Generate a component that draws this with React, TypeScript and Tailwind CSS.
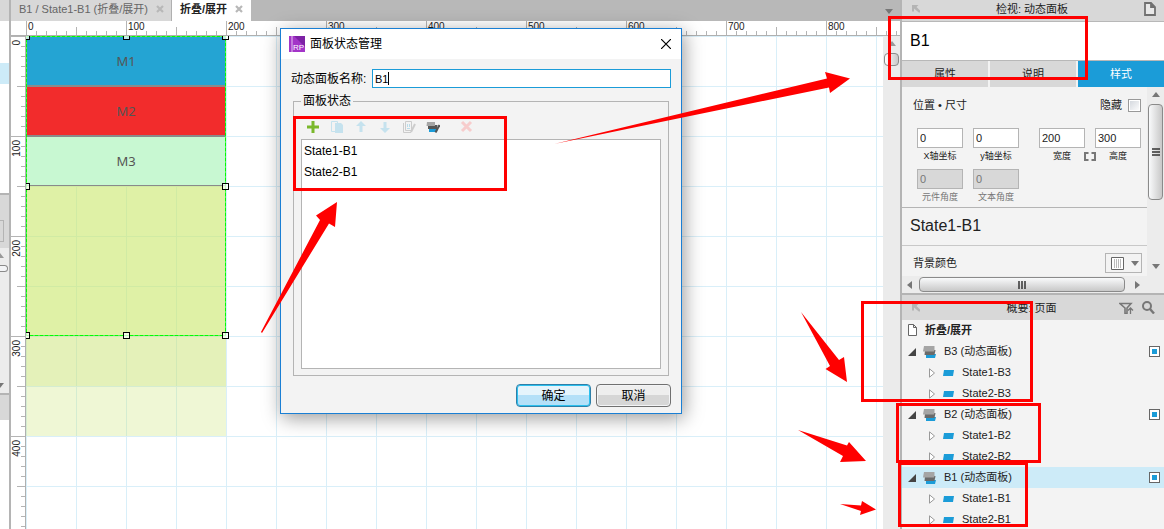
import { useState } from "react";
import type { ReactNode } from "react";

type TreeItem = { id: string; states: string[] };

const TREE: TreeItem[] = [
  { id: "B3", states: ["State1-B3", "State2-B3"] },
  { id: "B2", states: ["State1-B2", "State2-B2"] },
  { id: "B1", states: ["State1-B1", "State2-B1"] },
];

const H_MARKS = [0, 100, 200, 300, 400, 500, 600, 700, 800];
const V_MARKS = [0, 100, 200, 300, 400];
const TICKS = [0, 1, 2, 3, 4, 5, 6, 7, 8, 9];

// Selection handles, placed on the edges of the selected panel.
const HANDLES = [
  "-left-[3px] -top-[3px]",
  "left-[97px] -top-[3px]",
  "-right-[3px] -top-[3px]",
  "-left-[3px] top-[147px]",
  "-right-[3px] top-[147px]",
  "-left-[3px] -bottom-[3px]",
  "left-[97px] -bottom-[3px]",
  "-right-[3px] -bottom-[3px]",
];

function Triangle({ dir, className = "text-[#777777]" }: { dir: "up" | "down" | "left" | "right"; className?: string }) {
  const d = {
    up: "M0 6 4 1l4 5z",
    down: "M0 2h8L4 7z",
    left: "M6 0v8L1 4z",
    right: "M2 0v8l5-4z",
  }[dir];
  return (
    <svg viewBox="0 0 8 8" className={`size-2 flex-none ${className}`} fill="currentColor">
      <path d={d} />
    </svg>
  );
}

function PanelIcon() {
  return (
    <svg viewBox="0 0 14 12" className="h-3 w-3.5 flex-none">
      <path d="M3 8h10l-1 4H3z" fill="#1b9cd8" />
      <path d="M2 4h10.500l-1 5H1.500z" fill="#6a6a6a" />
      <path d="M1 0h10.500v4l-.5 1.500H0z" fill="#a5a5a5" />
    </svg>
  );
}

function CollapseIcon() {
  return (
    <svg viewBox="0 0 8 8" className="size-2 flex-none" fill="#b4b4b4">
      <path d="M0 0h6.500L4.500 2 8 5.500V7.500H6.800L2 3.500V6.500L0 6.500z" />
    </svg>
  );
}

function HorizontalRuler() {
  return (
    <div className="flex h-[15px] flex-none overflow-hidden border-b border-[#b0b0b0] bg-white pl-[15px] text-[10px] leading-[12px]">
      {H_MARKS.map((mark) => (
        <div key={mark} className="relative flex w-[100px] flex-none items-end">
          {TICKS.map((t) => (
            <span
              key={t}
              className={`w-[10px] flex-none border-l border-[#b4b4b4] ${t === 0 ? "h-[14px]" : t === 5 ? "h-2" : "h-1"}`}
            />
          ))}
          <span className="absolute left-0.5 top-0">{mark}</span>
        </div>
      ))}
    </div>
  );
}

function VerticalRuler() {
  return (
    <div className="flex w-[15px] flex-none flex-col overflow-hidden border-r border-[#b0b0b0] bg-white text-[10px] leading-[12px]">
      {V_MARKS.map((mark) => (
        <div key={mark} className="relative flex h-[100px] flex-none flex-col items-end">
          {TICKS.map((t) => (
            <span
              key={t}
              className={`h-[10px] flex-none border-t border-[#b4b4b4] ${t === 0 ? "w-[14px]" : t === 5 ? "w-2" : "w-1"}`}
            />
          ))}
          <span className="absolute left-0 top-1 rotate-180 [writing-mode:vertical-rl]">{mark}</span>
        </div>
      ))}
    </div>
  );
}

function Canvas() {
  const menu = "flex items-center justify-center border-[#8a8a8a]";
  return (
    <div className="min-w-0 flex-1 overflow-hidden bg-white bg-[linear-gradient(#d9eff9_1px,transparent_1px),linear-gradient(90deg,#d9eff9_1px,transparent_1px)] bg-[size:50px_50px]">
      <div className="relative w-[200px] font-['Noto_Sans','Noto_Sans_CJK_SC',sans-serif] text-[13px] text-[#555555]">
        <div className={`${menu} h-[51px] border-b-2 bg-[#24a4d3]`}>M1</div>
        <div className={`${menu} h-[50px] border-b-2 bg-[#f22c2c]`}>M2</div>
        <div className={`${menu} h-[49px] border-b bg-[#c8f8d2]`}>M3</div>
        <div className="h-[150px] bg-[#c9e76a]/60" />
        <div className="h-[50px] bg-[#cae473]/50" />
        <div className="h-[50px] bg-[#cae473]/30" />
        <div className="absolute left-0 top-0 h-[300px] w-[200px]">
          <svg viewBox="0 0 200 300" className="absolute left-0 top-0 h-full w-full" fill="none">
            <path d="M.5.5h199v299H.5z" stroke="#a0e0a0" />
            <path d="M.5.5h199v299H.5z" stroke="#00ff00" strokeDasharray="4 1" />
          </svg>
          {HANDLES.map((pos) => (
            <span key={pos} className={`absolute size-[7px] border border-black bg-white/70 ${pos}`} />
          ))}
        </div>
      </div>
    </div>
  );
}

function LeftEdge() {
  return (
    <aside className="flex w-[11px] flex-none flex-col border-r-2 border-[#b4b4b4] bg-white">
      <div className="h-[21px] bg-[#d8d8d8]" />
      <div className="h-[42px]" />
      <div className="h-[21px] bg-[#cdebf8]" />
      <div className="h-[109px]" />
      <div className="h-[55px] border-t-2 border-[#b4b4b4] bg-[#d8d8d8] pt-[25px]">
        <div className="h-[22px] w-1 border-y border-r border-[#b4b4b4]" />
      </div>
      <div className="flex h-[145px] flex-col items-start overflow-hidden bg-[#ececec] py-1">
        <Triangle dir="up" className="-ml-1 text-[#999999]" />
        <div className="mt-[5px] h-[7px] w-2 rounded-r-sm border border-l-0 border-[#8a8a8a] bg-gray-100" />
        <Triangle dir="down" className="-ml-1 mt-auto text-[#777777]" />
      </div>
      <div className="h-[27px] border-t-2 border-[#b4b4b4] bg-[#d8d8d8]" />
    </aside>
  );
}

function CloseTab() {
  return (
    <button aria-label="关闭" className="text-[#b8b8b8]">
      <svg viewBox="0 0 8 8" className="size-2" stroke="currentColor" strokeWidth="2.200">
        <path d="M1 1l6 6M7 1 1 7" />
      </svg>
    </button>
  );
}

function TabBar() {
  return (
    <div className="flex h-[21px] flex-none items-stretch bg-[#b8b8b8]">
      <div className="flex w-[161px] items-center justify-between border-r border-[#b0b0b0] bg-[#d8d8d8] pb-[3px] pl-2 pr-[7px] text-[#666666]">
        <button className="whitespace-nowrap">B1 / State1-B1 (折叠/展开)</button>
        <CloseTab />
      </div>
      <div className="flex w-[79px] items-center justify-between bg-white px-2 pb-[3px] font-bold">
        <button className="whitespace-nowrap">折叠/展开</button>
        <CloseTab />
      </div>
      <button aria-label="更多标签" className="ml-auto px-[7px]">
        <Triangle dir="down" />
      </button>
    </div>
  );
}

function NumberField({ id, label, value, disabled }: { id: string; label: string; value: string; disabled?: boolean }) {
  return (
    <div className="flex w-[46px] flex-col items-center">
      <input
        id={id}
        defaultValue={value}
        disabled={disabled}
        className="h-5 w-full border border-[#b4b4b4] bg-white px-0.5 text-[11px] disabled:bg-[#d8d8d8] disabled:text-[#777777]"
      />
      <label htmlFor={id} className={`whitespace-nowrap text-[9px] leading-4 ${disabled ? "text-[#777777]" : ""}`}>
        {label}
      </label>
    </div>
  );
}

function Inspector() {
  const [tab, setTab] = useState("样式");
  return (
    <section className="flex h-[295px] flex-none flex-col border-b-2 border-[#b4b4b4]">
      <header className="flex h-[22px] flex-none items-center justify-between border-b border-[#b8b8b8] bg-[#d8d8d8] pb-1 pl-[10px] pr-2">
        <CollapseIcon />
        <h2>检视: 动态面板</h2>
        <svg viewBox="0 0 12 14" className="h-3.5 w-3" fill="#e8e8e8" stroke="#707070" strokeWidth="1.800">
          <path d="M1 1h6l4 4v8H1zM7 1v4h4" />
        </svg>
      </header>
      <input
        aria-label="名称"
        defaultValue="B1"
        className="h-[39px] w-full flex-none border-b border-[#b8b8b8] bg-white px-2 text-[16px] text-black outline-none"
      />
      <div role="tablist" className="flex h-[26px] flex-none gap-0.5">
        {["属性", "说明", "样式"].map((name) => (
          <button
            key={name}
            role="tab"
            aria-selected={tab === name}
            onClick={() => setTab(name)}
            className={`flex-1 ${tab === name ? "bg-[#1b9cd8] text-white" : "bg-[#d8d8d8]"}`}
          >
            {name}
          </button>
        ))}
      </div>
      <div className="flex h-[189px] flex-none">
        <div className="min-w-0 flex-1">
          <div className="h-[121px] border-b border-[#b4b4b4] pl-[11px] pr-1.5 pt-[11px]">
            <div className="flex h-[14px] items-center justify-between">
              <h3>位置 • 尺寸</h3>
              <label className="flex items-center gap-1.5">
                隐藏
                <input
                  type="checkbox"
                  className="size-[13px] appearance-none border border-[#999999] bg-gradient-to-br from-gray-300 to-white ring-1 ring-inset ring-white"
                />
              </label>
            </div>
            <div className="mt-4 flex justify-between pl-1">
              <div className="flex gap-[10px]">
                <NumberField id="x" label="X轴坐标" value="0" />
                <NumberField id="y" label="y轴坐标" value="0" />
              </div>
              <div className="flex">
                <NumberField id="w" label="宽度" value="200" />
                <button aria-label="锁定宽高比" className="mt-5 flex h-4 w-[10px] items-center justify-center overflow-visible">
                  <svg viewBox="0 0 12 9" className="h-[9px] w-3 flex-none" fill="none" stroke="#777777" strokeWidth="2">
                    <path d="M4.500 1H1v7h3.500M7.500 1H11v7H7.500" />
                  </svg>
                </button>
                <NumberField id="h" label="高度" value="300" />
              </div>
            </div>
            <div className="mt-[5px] flex gap-[10px] pl-1">
              <NumberField id="rotate" label="元件角度" value="0" disabled />
              <NumberField id="text-rotate" label="文本角度" value="0" disabled />
            </div>
          </div>
          <div className="flex h-[38px] items-center border-b border-[#c8c8c8] px-2 pb-0.5 text-[16px]">State1-B1</div>
          <div className="flex h-[30px] items-center justify-between pl-[11px] pr-[5px] pt-1">
            <span>背景颜色</span>
            <button aria-label="背景颜色" className="flex h-5 w-[37px] items-center justify-between border border-[#b4b4b4] pl-[5px] pr-0.5">
              <svg viewBox="0 0 13 13" className="size-[13px]">
                <path d="M.5.5h12v12H.5z" fill="#ffffff" stroke="#666666" />
                <path d="M3.500 2v9M5.500 2v9M7.500 2v9M9.500 2v9" stroke="#bbbbbb" />
              </svg>
              <Triangle dir="down" />
            </button>
          </div>
        </div>
        <div className="flex w-[17px] flex-none flex-col items-center bg-[#ececec] py-1">
          <Triangle dir="up" />
          <div className="mt-[5px] flex h-24 w-[15px] items-center justify-center rounded-sm border border-[#8a8a8a] bg-gradient-to-r from-gray-50 to-[#c8c8c8]">
            <svg viewBox="0 0 8 8" className="size-2" stroke="#333333" strokeWidth="1.500">
              <path d="M0 1h8M0 4h8M0 7h8" />
            </svg>
          </div>
          <Triangle dir="down" className="mb-0.5 mt-auto text-[#777777]" />
        </div>
      </div>
      <div className="flex flex-1 items-center bg-[#ececec] pl-1">
        <Triangle dir="left" />
        <div className="ml-[5px] flex h-[15px] flex-1 items-center justify-center rounded-sm border border-[#8a8a8a] bg-gradient-to-b from-gray-50 to-[#c8c8c8]">
          <svg viewBox="0 0 8 8" className="size-2" stroke="#333333" strokeWidth="1.500">
            <path d="M1 0v8M4 0v8M7 0v8" />
          </svg>
        </div>
        <Triangle dir="right" className="ml-2 mr-[23px] text-[#777777]" />
      </div>
    </section>
  );
}

function Outline() {
  return (
    <section className="min-h-0 flex-1 overflow-hidden">
      <header className="flex h-[25px] items-center bg-[#d8d8d8] pl-[10px] pr-[9px]">
        <CollapseIcon />
        <h2 className="flex-1 pl-6 text-center">概要: 页面</h2>
        <button aria-label="筛选" className="mr-2">
          <svg viewBox="0 0 15 12" className="h-3 w-[15px]" fill="none" stroke="#777777" strokeWidth="1.600">
            <path d="M1 1.500h11L8 6v5.500H6V6z" />
            <path d="M11.500 12V6.500M9 8.500l2.500-2.500L14 8.500" strokeWidth="1.300" />
          </svg>
        </button>
        <button aria-label="搜索">
          <svg viewBox="0 0 13 13" className="size-[13px]" fill="none" stroke="#777777" strokeWidth="2">
            <circle cx="5" cy="5" r="4" />
            <path d="M8 8l4 4.500" strokeWidth="2.400" />
          </svg>
        </button>
      </header>
      <div className="flex h-[21px] items-center gap-2 pb-0.5 pl-1.5 font-bold">
        <svg viewBox="0 0 9 12" className="h-3 w-[9px]" fill="#ffffff" stroke="#666666">
          <path d="M.5.5h5l3 3v8h-8zM5.500.5v3h3" />
        </svg>
        折叠/展开
      </div>
      <ul>
        {TREE.map((item) => (
          <li key={item.id}>
            <div className={`flex h-[21px] items-center pl-1.5 pr-1 ${item.id === "B1" ? "bg-[#cdebf8]" : ""}`}>
              <svg viewBox="0 0 8 8" className="mr-[7px] size-2" fill="#444444">
                <path d="M8 0v8H0z" />
              </svg>
              <PanelIcon />
              <button className="ml-[7px] pb-0.5">{item.id} (动态面板)</button>
              <button aria-label="在视图中隐藏" className="ml-auto flex size-[11px] items-center justify-center border border-[#666666] bg-white">
                <span className="size-[5px] bg-[#1b9cd8]" />
              </button>
            </div>
            <ul>
              {item.states.map((state) => (
                <li key={state} className="flex h-[21px] items-center pl-[27px]">
                  <svg viewBox="0 0 6 10" className="mr-2 h-[10px] w-1.5" fill="#ffffff" stroke="#999999">
                    <path d="M.5.8v8.400L5.500 5z" />
                  </svg>
                  <svg viewBox="0 0 11 6" className="h-1.5 w-[11px]" fill="#1b9cd8">
                    <path d="M1 0h10l-1 6H0z" />
                  </svg>
                  <button className="ml-2 pb-0.5">{state}</button>
                </li>
              ))}
            </ul>
          </li>
        ))}
      </ul>
    </section>
  );
}

function ToolButton({ label, className = "", children }: { label: string; className?: string; children: ReactNode }) {
  return (
    <button type="button" aria-label={label} className={`flex w-6 items-center justify-center ${className}`}>
      <svg viewBox="0 0 14 14" className="size-3.5">
        {children}
      </svg>
    </button>
  );
}

function PanelStateDialog() {
  return (
    <div
      role="dialog"
      aria-label="面板状态管理"
      className="absolute left-[280px] top-7 w-[402px] border border-[#1a7fd4] bg-[#f3f3f3] text-[12px] leading-[14px] text-black shadow-[2px_4px_18px_rgba(0,0,0,0.4)]"
    >
      <div className="flex h-[30px] items-center bg-white pl-2 pr-[10px]">
        <svg viewBox="0 0 16 16" className="size-4">
          <path d="M0 0h16v16H0z" fill="#a335c8" />
          <path d="M5 0h11v11z" fill="#7d22a5" />
          <path d="M3 0v16" stroke="#e5c4f0" />
          <text x="4" y="13.500" fontSize="8" fill="#ffffff" className="font-['Liberation_Sans',sans-serif]">
            RP
          </text>
        </svg>
        <h1 className="ml-[5px]">面板状态管理</h1>
        <button aria-label="关闭" className="ml-auto">
          <svg viewBox="0 0 10 10" className="size-[10px]" stroke="#000000" strokeWidth="1.200">
            <path d="M0 0l10 10M10 0 0 10" />
          </svg>
        </button>
      </div>
      <div className="flex items-center px-[10px] pt-[10px]">
        <label htmlFor="panel-name" className="w-[81px] flex-none whitespace-nowrap">
          动态面板名称:
        </label>
        <div className="relative flex-1">
          <input
            id="panel-name"
            defaultValue="B1"
            className="block h-[19px] w-full border border-[#1b9cd8] bg-white px-0.5 text-[11px] outline-none"
          />
          <span className="absolute left-4 top-[3px] h-[13px] w-px bg-black" />
        </div>
      </div>
      <fieldset className="mx-3 mt-1.5 border border-[#b4b4b4] px-[7px] pb-1.5">
        <legend className="px-0.5">面板状态</legend>
        <div className="flex h-[31px] pt-1.5">
          <ToolButton label="添加">
            <path d="M7 1v12M1 7h12" stroke="#7ab82c" strokeWidth="3" />
          </ToolButton>
          <ToolButton label="复制">
            <path d="M1.500 1.500h6v10h-6z" fill="none" stroke="#c5e2ee" />
            <path d="M5 3h6l2 2v8H5z" fill="#c5e2ee" />
          </ToolButton>
          <ToolButton label="上移">
            <path d="M7 1l5 5H8.500v6h-3V6H2z" fill="#c5e2ee" />
          </ToolButton>
          <ToolButton label="下移">
            <path d="M7 13l5-5H8.500V2h-3v6H2z" fill="#c5e2ee" />
          </ToolButton>
          <ToolButton label="编辑状态">
            <path d="M3.500 1.500h6v9h-6zM1.500 3v9.500H9" fill="none" stroke="#cccccc" />
            <path d="M5 4h1v3H5zM7 4h1v3H7zM5 8h3v1H5z" fill="#b9dcea" />
            <path d="M13 4 9 12" stroke="#cccccc" strokeWidth="2" />
          </ToolButton>
          <ToolButton label="编辑全部状态">
            <path d="M3 8h9l-1 4H3z" fill="#1b9cd8" />
            <path d="M2 5h9.500l-.5 4H2z" fill="#555555" />
            <path d="M1 2h8v4H.5z" fill="#a5a5a5" />
            <path d="M13.500 5 9.500 12.500" stroke="#555555" strokeWidth="2" />
          </ToolButton>
          <ToolButton label="删除" className="ml-[10px]">
            <path d="M2 2l9 9M11 2l-9 9" stroke="#f7cccc" strokeWidth="3" />
          </ToolButton>
        </div>
        <ul className="h-[230px] border border-[#b4b4b4] bg-white px-0.5 pt-px">
          {["State1-B1", "State2-B1"].map((name) => (
            <li key={name} className="leading-[21px]">
              {name}
            </li>
          ))}
        </ul>
      </fieldset>
      <div className="flex justify-end gap-[5px] px-[10px] pb-1.5 pt-2">
        <button className="h-[23px] w-[75px] rounded-sm border border-[#2f7fa8] bg-gradient-to-b from-[#e5f4fc] from-50% to-[#b4e0f8] to-50% ring-1 ring-inset ring-[#2cc0ee]">
          确定
        </button>
        <button className="h-[23px] w-[75px] rounded-sm border border-[#707070] bg-gradient-to-b from-[#eeeeee] from-50% to-[#d6d6d6] to-50% ring-1 ring-inset ring-gray-100">
          取消
        </button>
      </div>
    </div>
  );
}

// Red call-out frames and arrows drawn above the workspace.
function Annotations() {
  return (
    <svg className="pointer-events-none absolute left-0 top-0 h-full w-full overflow-visible">
      <g fill="none" stroke="#ff0000" strokeWidth="3">
        <rect x="294.500" y="117.500" width="211" height="72" />
        <rect x="889.500" y="17.500" width="197" height="61" />
        <rect x="862.500" y="302.500" width="169" height="98" />
        <rect x="897.500" y="404.500" width="142" height="57" />
        <rect x="899.500" y="463.500" width="127" height="62" />
      </g>
      <g fill="#ff0000">
        <path d="M554 144 827 78.500 825 72 850 78.500 830 93 829 87.500z" />
        <path d="M261 332 320 220 316 215.500 337 202 335 227 329 223.500 262 333z" />
        <path d="M801 312 839 360 844 357 847 382 825.500 369 830 366z" />
        <path d="M798 430 847 445.500 849 442 866 461 840 462 843 456z" />
        <path d="M840 504 861 505.500 862 501 876 509.500 860 515 861 511z" />
      </g>
    </svg>
  );
}

export default function App() {
  return (
    <div className="relative flex h-screen overflow-hidden bg-white font-['Liberation_Sans','Noto_Sans_CJK_SC',sans-serif] text-[11px] leading-[14px] text-[#222222]">
      <LeftEdge />
      <main className="flex min-w-0 flex-1 flex-col">
        <TabBar />
        <HorizontalRuler />
        <div className="flex min-h-0 flex-1">
          <VerticalRuler />
          <Canvas />
          <div className="flex w-[17px] flex-none flex-col items-center bg-[#ebebeb] pt-1">
            <Triangle dir="up" className="text-[#999999]" />
            <div className="mt-[5px] h-[13px] w-[15px] rounded-sm border border-[#8a8a8a] bg-gradient-to-r from-white to-[#c8c8c8]" />
          </div>
        </div>
      </main>
      <aside className="flex w-[264px] flex-none flex-col border-l-2 border-[#b4b4b4] bg-[#f3f3f3]">
        <Inspector />
        <Outline />
      </aside>
      <PanelStateDialog />
      <Annotations />
    </div>
  );
}
